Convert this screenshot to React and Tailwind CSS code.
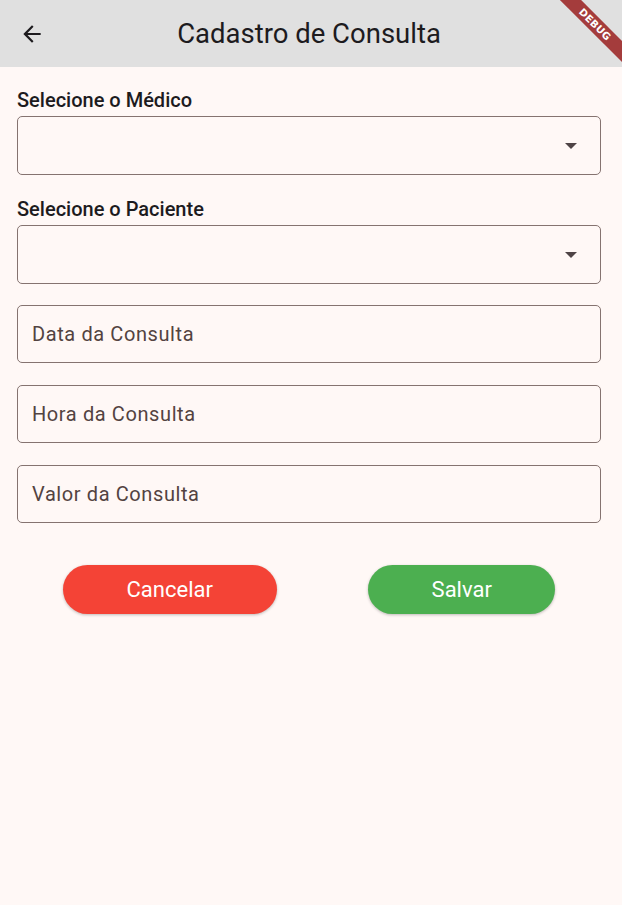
import React from 'react';

function ArrowLeft() {
    return (
        <svg className="w-[26px] h-[26px]" viewBox="0 0 24 24" fill="#1d1b1e">
            <path d="M20 11H7.83l5.59-5.59L12 4l-8 8 8 8 1.41-1.41L7.83 13H20v-2z" />
        </svg>
    );
}

function DropdownField({ label, className = '' }) {
    return (
        <div className={`flex flex-col ${className}`}>
            <span className="text-[20px] font-medium text-[#1d1b1e] leading-[24px] mb-[4px]">{label}</span>
            <div className="h-[59px] rounded-[5px] border border-[#857370] flex items-center justify-end pr-[23px]">
                <div className="w-0 h-0 border-l-[6px] border-r-[6px] border-t-[6px] border-l-transparent border-r-transparent border-t-[#4f4446]" />
            </div>
        </div>
    );
}

function TextField({ placeholder }) {
    return (
        <div className="h-[58px] rounded-[5px] border border-[#857370] flex items-center px-[14px]">
            <span className="text-[20px] tracking-[0.6px] text-[#534341]">{placeholder}</span>
        </div>
    );
}

export default function App() {
    return (
        <div className="relative w-[622px] h-[905px] overflow-hidden bg-[#fff8f6] font-['Roboto',sans-serif]">
            {/* app bar */}
            <div className="h-[67px] bg-[#e0e0e0] flex items-center px-[19px]">
                <ArrowLeft />
                <h1 className="flex-1 text-center text-[27.5px] text-[#1d1b1e] pr-[30px]">Cadastro de Consulta</h1>
            </div>

            <div className="pl-[17px] pr-[21px] pt-[21px] flex flex-col">
                <DropdownField label="Selecione o Médico" />
                <DropdownField label="Selecione o Paciente" className="mt-[22px]" />
                <div className="flex flex-col gap-[22px] mt-[21px]">
                    <TextField placeholder="Data da Consulta" />
                    <TextField placeholder="Hora da Consulta" />
                    <TextField placeholder="Valor da Consulta" />
                </div>

                <div className="flex justify-around mt-[42px]">
                    <button className="w-[214px] h-[49px] rounded-full bg-[#f44336] text-white text-[22px] shadow-[0_1px_3px_rgba(0,0,0,0.25)]">
                        Cancelar
                    </button>
                    <button className="w-[187px] h-[49px] rounded-full bg-[#4caf50] text-white text-[22px] shadow-[0_1px_3px_rgba(0,0,0,0.25)]">
                        Salvar
                    </button>
                </div>
            </div>

            {/* debug banner */}
            <div className="absolute top-[17px] right-[-33px] w-[120px] h-[15px] rotate-45 bg-[#a43c3c] flex items-center justify-center">
                <span className="text-[10px] font-bold text-white tracking-[0.3px] leading-none font-['DejaVu_Sans',sans-serif]">DEBUG</span>
            </div>
        </div>
    );
}
